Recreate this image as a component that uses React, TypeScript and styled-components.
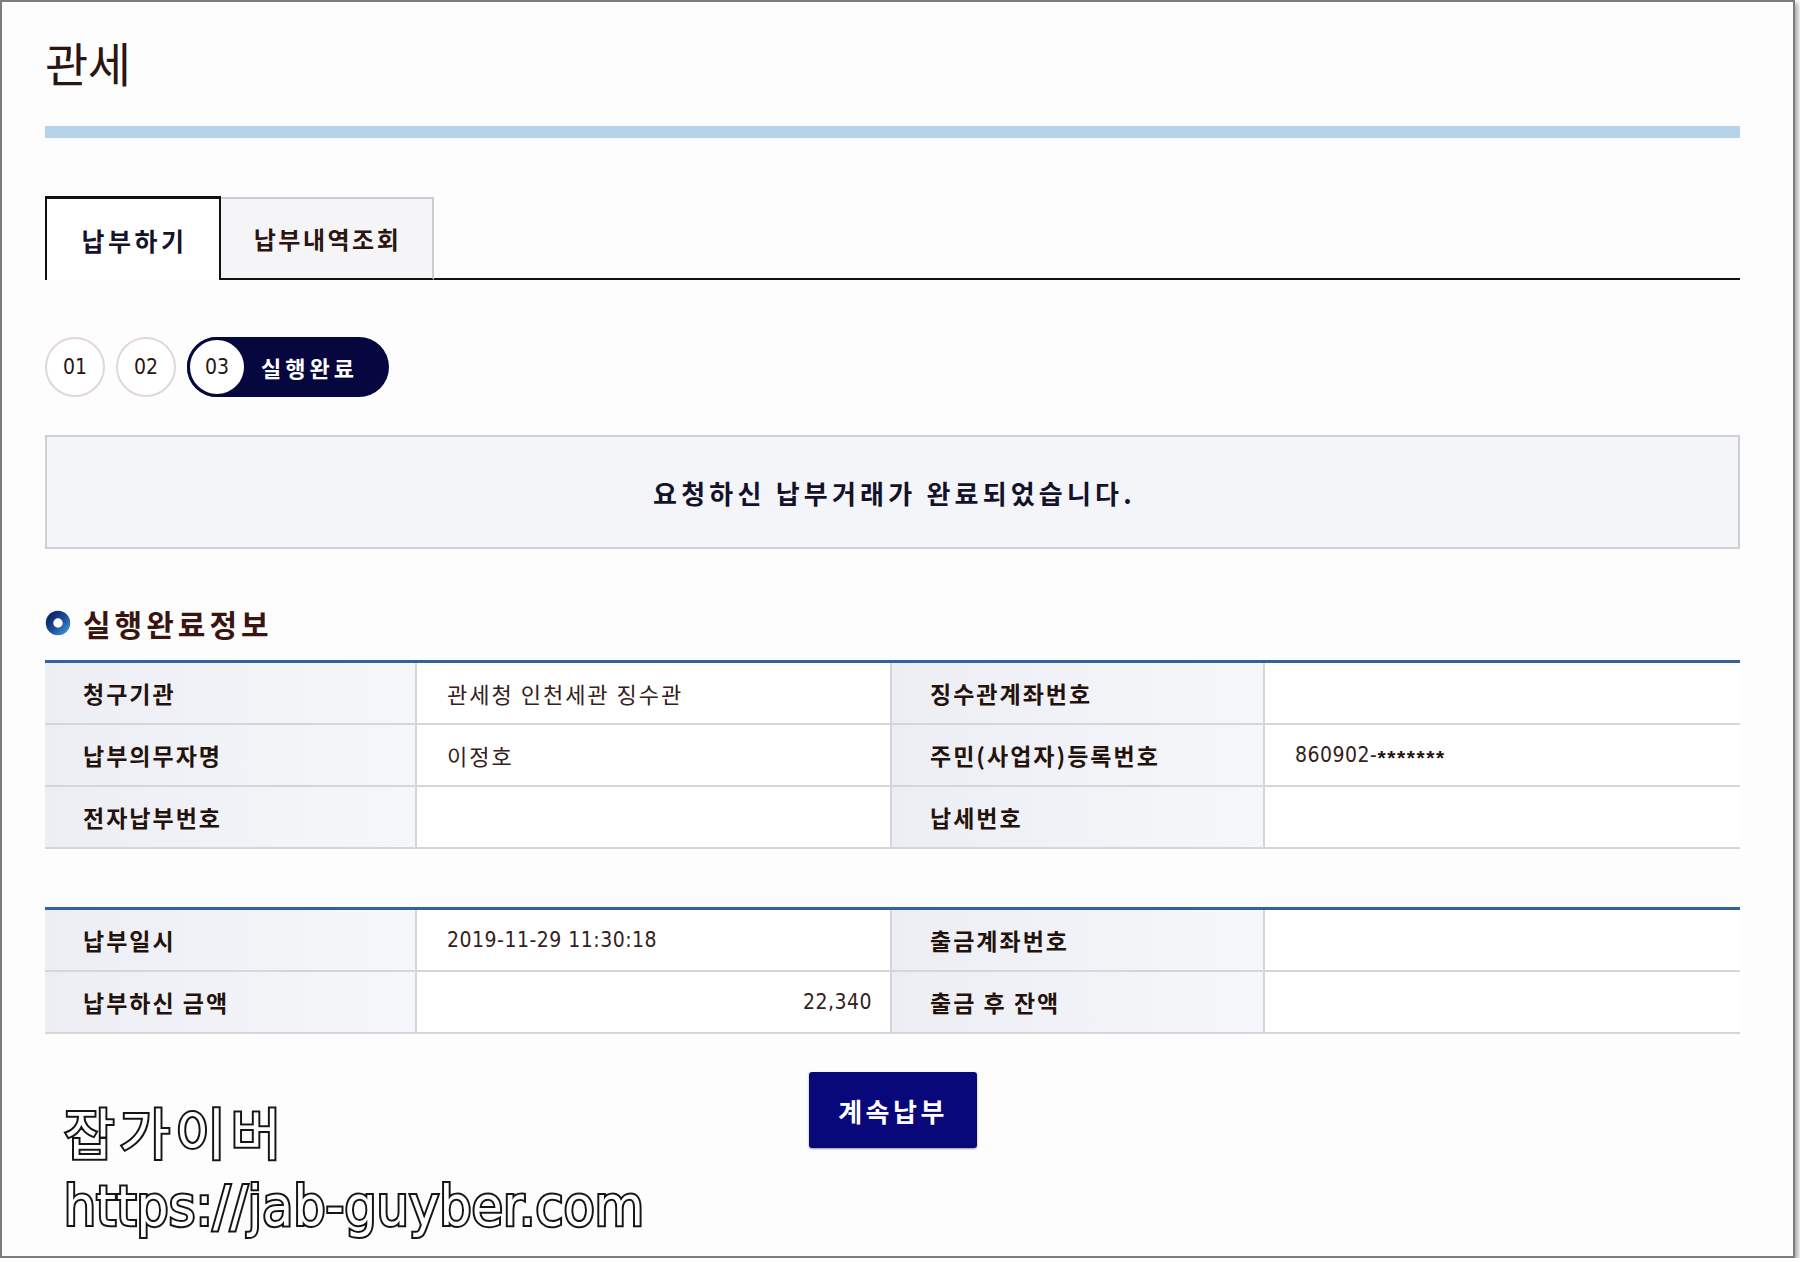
import styled, { createGlobalStyle } from "styled-components";

const GlobalStyle = createGlobalStyle`
  html, body {
    margin: 0;
    padding: 0;
    background: #ffffff;
  }
  body {
    font-family: "Noto Sans CJK KR", "Noto Sans", sans-serif;
    color: #2a1712;
  }
  * {
    box-sizing: border-box;
  }
`;

interface InfoRow {
  label: string;
  value: string;
  label2: string;
  value2: string;
  mask?: string;
  right?: boolean;
}

const firstTable: InfoRow[] = [
  { label: "청구기관", value: "관세청 인천세관 징수관", label2: "징수관계좌번호", value2: "" },
  { label: "납부의무자명", value: "이정호", label2: "주민(사업자)등록번호", value2: "860902-", mask: "*******" },
  { label: "전자납부번호", value: "", label2: "납세번호", value2: "" },
];

const secondTable: InfoRow[] = [
  { label: "납부일시", value: "2019-11-29 11:30:18", label2: "출금계좌번호", value2: "" },
  { label: "납부하신 금액", value: "22,340", label2: "출금 후 잔액", value2: "", right: true },
];

const isKorean = (s: string) => /[가-힣]/.test(s);

const InfoTable = ({ rows }: { rows: InfoRow[] }) => (
  <Table>
    {rows.map((r) => (
      <>
        <Cell $label key={r.label}>{r.label}</Cell>
        <Cell $right={r.right}>
          <Value $ko={isKorean(r.value)}>{r.value}</Value>
        </Cell>
        <Cell $label>{r.label2}</Cell>
        <Cell $last>
          <Value $ko={isKorean(r.value2)}>{r.value2}</Value>
          {r.mask && <Mask>{r.mask}</Mask>}
        </Cell>
      </>
    ))}
  </Table>
);

export default function App() {
  return (
    <>
      <GlobalStyle />
      <Frame>
        <Title>관세</Title>
        <BlueBar />
        <Tabs>
          <ActiveTab>납부하기</ActiveTab>
          <Tab>납부내역조회</Tab>
          <TabFill />
        </Tabs>
        <Steps>
          <StepCircle>01</StepCircle>
          <StepCircle>02</StepCircle>
          <StepPill>
            <StepCircle $current>03</StepCircle>
            <StepLabel>실행완료</StepLabel>
          </StepPill>
        </Steps>
        <MessageBox>요청하신 납부거래가 완료되었습니다.</MessageBox>
        <SectionTitle>
          <svg width="26" height="26" viewBox="0 0 26 26">
            <defs>
              <linearGradient id="ring" x1="0" y1="0" x2="1" y2="1">
                <stop offset="0" stopColor="#0b2463" />
                <stop offset="0.55" stopColor="#1c4f9a" />
                <stop offset="1" stopColor="#3a8ad0" />
              </linearGradient>
            </defs>
            <circle cx="13" cy="13" r="8.5" fill="none" stroke="url(#ring)" strokeWidth="7.5" />
          </svg>
          실행완료정보
        </SectionTitle>
        <InfoTable rows={firstTable} />
        <Spacer />
        <InfoTable rows={secondTable} />
        <ContinueButton>계속납부</ContinueButton>
        <Watermark>
          <WatermarkLine>잡가이버</WatermarkLine>
          <WatermarkUrl>https://jab-guyber.com</WatermarkUrl>
        </Watermark>
      </Frame>
    </>
  );
}

const Frame = styled.div`
  position: relative;
  width: 1795px;
  height: 1258px;
  border: 2px solid #7d7d7d;
  box-shadow: 3px 3px 5px rgba(0, 0, 0, 0.35);
  background: #fefdfe;
  padding: 0 53px 0 43px;
  display: flex;
  flex-direction: column;
`;

const Title = styled.h1`
  margin: 32px 0 0;
  font-size: 47px;
  line-height: 56px;
  font-weight: 400;
  color: #2b1510;
  letter-spacing: -0.5px;
`;

const BlueBar = styled.div`
  margin-top: 36px;
  height: 12px;
  background: #b5d3ea;
`;

const Tabs = styled.div`
  margin-top: 58px;
  height: 84px;
  display: flex;
  align-items: flex-end;
`;

const ActiveTab = styled.div`
  width: 176px;
  height: 84px;
  border: 2px solid #111;
  border-top-width: 3px;
  border-bottom: none;
  background: #fff;
  display: flex;
  align-items: center;
  justify-content: center;
  padding-left: 3px;
  font-size: 25px;
  font-weight: 700;
  letter-spacing: 3.5px;
  color: #16122a;
`;

const Tab = styled.div`
  width: 213px;
  height: 83px;
  border-top: 2px solid #cdcbd4;
  border-right: 2px solid #cdcbd4;
  border-bottom: 2px solid #111;
  background: #f5f4f7;
  display: flex;
  align-items: center;
  justify-content: center;
  padding-left: 2px;
  font-size: 24px;
  font-weight: 700;
  letter-spacing: 2.5px;
  color: #2a1510;
`;

const TabFill = styled.div`
  flex: 1;
  border-bottom: 2px solid #111;
`;

const Steps = styled.div`
  margin-top: 57px;
  display: flex;
  gap: 11px;
  height: 60px;
`;

const StepCircle = styled.div<{ $current?: boolean }>`
  width: 60px;
  height: 60px;
  border-radius: 50%;
  border: ${(p) => (p.$current ? "3px solid #07073f" : "2px solid #e2d8d2")};
  background: #fff;
  display: flex;
  align-items: center;
  justify-content: center;
  font-family: "DejaVu Sans Condensed", "DejaVu Sans", sans-serif;
  font-stretch: condensed;
  font-size: 21px;
  color: #2a1510;
  flex-shrink: 0;
`;

const StepPill = styled.div`
  width: 202px;
  height: 60px;
  border-radius: 30px;
  background: #07073f;
  display: flex;
  align-items: center;
`;

const StepLabel = styled.span`
  margin-left: 14px;
  font-size: 22px;
  font-weight: 700;
  color: #fff;
  letter-spacing: 4px;
`;

const MessageBox = styled.div`
  margin-top: 38px;
  height: 114px;
  border: 2px solid #cfcfd6;
  background: #f4f5f8;
  display: flex;
  align-items: center;
  justify-content: center;
  padding-left: 4px;
  font-size: 26px;
  font-weight: 700;
  letter-spacing: 4.2px;
  color: #14122a;
`;

const SectionTitle = styled.h2`
  margin: 54px 0 0;
  height: 40px;
  display: flex;
  align-items: center;
  gap: 12px;
  font-size: 30px;
  font-weight: 700;
  color: #3a1510;
  letter-spacing: 4px;
`;

const Table = styled.div`
  margin-top: 17px;
  border-top: 3px solid #34639a;
  display: grid;
  grid-template-columns: 372px 475px 373px 1fr;
`;

const Cell = styled.div<{ $label?: boolean; $right?: boolean; $last?: boolean }>`
  height: 62px;
  border-bottom: 2px solid #d6d5dc;
  border-right: ${(p) => (p.$last ? "none" : "2px solid #d6d5dc")};
  background: ${(p) =>
    p.$label ? "linear-gradient(90deg, #eceef4, #f6f7fa)" : "#fff"};
  display: flex;
  align-items: center;
  justify-content: ${(p) => (p.$right ? "flex-end" : "flex-start")};
  padding: ${(p) => (p.$label ? "0 0 0 38px" : p.$right ? "0 18px 0 0" : "0 0 0 30px")};
  font-size: 23px;
  font-weight: ${(p) => (p.$label ? 700 : 400)};
  letter-spacing: ${(p) => (p.$label ? "2px" : "0")};
  color: #24120c;
  white-space: nowrap;
`;

const Value = styled.span<{ $ko?: boolean }>`
  font-family: ${(p) =>
    p.$ko
      ? '"Noto Sans CJK KR", sans-serif'
      : '"DejaVu Sans Condensed", "DejaVu Sans", sans-serif'};
  font-stretch: ${(p) => (p.$ko ? "normal" : "condensed")};
  font-size: ${(p) => (p.$ko ? "22px" : "21px")};
  letter-spacing: ${(p) => (p.$ko ? "2px" : "0.5px")};
  color: #35201a;
`;

const Mask = styled.span`
  font-family: "Liberation Sans", sans-serif;
  font-size: 21px;
  font-weight: 700;
  letter-spacing: 1.6px;
  color: #24120c;
  position: relative;
  top: 3px;
`;

const Spacer = styled.div`
  height: 41px;
`;

const ContinueButton = styled.button`
  margin-top: 38px;
  align-self: center;
  width: 168px;
  height: 76px;
  border: none;
  border-radius: 3px;
  background: #08087a;
  color: #fff;
  font-family: "Noto Sans CJK KR", sans-serif;
  font-size: 26px;
  font-weight: 700;
  letter-spacing: 3.5px;
  padding-left: 7px;
  box-shadow: 0 1px 2px rgba(0, 0, 0, 0.4);
`;

const Watermark = styled.div`
  position: absolute;
  left: 62px;
  top: 1088px;
  display: flex;
  flex-direction: column;
  color: #fff;
  -webkit-text-stroke: 4px #151515;
  paint-order: stroke fill;
`;

const WatermarkLine = styled.div`
  font-family: "Noto Sans CJK KR", sans-serif;
  font-size: 55px;
  line-height: 80px;
  font-weight: 400;
  letter-spacing: 5px;
`;

const WatermarkUrl = styled.div`
  font-family: "DejaVu Sans Condensed", "DejaVu Sans", sans-serif;
  font-stretch: condensed;
  font-size: 56px;
  line-height: 72px;
  letter-spacing: 0.4px;
`;
